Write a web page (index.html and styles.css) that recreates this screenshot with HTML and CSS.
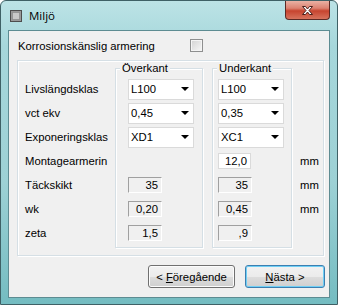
FILE: index.html
```html
<!DOCTYPE html>
<html lang="sv">
<head>
  <meta charset="UTF-8">
  <meta name="viewport" content="width=device-width, initial-scale=1.0">
  <title>Miljö</title>
  <link rel="stylesheet" href="styles.css">
</head>
<body>

<div class="window">
  <!-- Title bar -->
  <div class="titlebar">
    <svg class="app-icon" width="12" height="12" viewBox="0 0 12 12">
      <rect x="0.5" y="0.5" width="11" height="11" fill="#9a9a9a" stroke="#4d4d4d"/>
      <rect x="2.5" y="2.5" width="7" height="7" fill="#c9c9c9" stroke="#7a7a7a" stroke-dasharray="1 1"/>
    </svg>
    <span class="title">Miljö</span>
    <button class="close" aria-label="Stäng">
      <svg width="13" height="11" viewBox="0 0 13 11">
        <path d="M1.5 1.5 L4.5 1.5 L6.5 4 L8.5 1.5 L11.5 1.5 L8 5.5 L11.5 9.5 L8.5 9.5 L6.5 7 L4.5 9.5 L1.5 9.5 L5 5.5 Z" fill="#fff" stroke="#4a1f1a" stroke-width="1"/>
      </svg>
    </button>
  </div>

  <div class="client">
    <div class="check-row">
      <span class="check-label">Korrosionskänslig armering</span>
      <span class="checkbox"></span>
    </div>

    <div class="panel">
      <!-- Row captions -->
      <div class="labels">
        <div class="row">Livslängdsklas</div>
        <div class="row">vct ekv</div>
        <div class="row">Exponeringsklas</div>
        <div class="row">Montagearmerin</div>
        <div class="row">Täckskikt</div>
        <div class="row">wk</div>
        <div class="row">zeta</div>
      </div>

      <!-- Överkant -->
      <div class="group group-over">
        <span class="legend">Överkant</span>
        <div class="rows">
          <div class="row"><div class="combo"><span>L100</span><i class="arrow"></i></div></div>
          <div class="row"><div class="combo"><span>0,45</span><i class="arrow"></i></div></div>
          <div class="row"><div class="combo"><span>XD1</span><i class="arrow"></i></div></div>
          <div class="row"></div>
          <div class="row"><div class="readonly">35</div></div>
          <div class="row"><div class="readonly">0,20</div></div>
          <div class="row"><div class="readonly">1,5</div></div>
        </div>
      </div>

      <!-- Underkant -->
      <div class="group group-under">
        <span class="legend">Underkant</span>
        <div class="rows">
          <div class="row"><div class="combo"><span>L100</span><i class="arrow"></i></div></div>
          <div class="row"><div class="combo"><span>0,35</span><i class="arrow"></i></div></div>
          <div class="row"><div class="combo"><span>XC1</span><i class="arrow"></i></div></div>
          <div class="row"><div class="textbox">12,0</div></div>
          <div class="row"><div class="readonly">35</div></div>
          <div class="row"><div class="readonly">0,45</div></div>
          <div class="row"><div class="readonly">,9</div></div>
        </div>
      </div>

      <!-- Units -->
      <div class="units">
        <div class="row"></div>
        <div class="row"></div>
        <div class="row"></div>
        <div class="row">mm</div>
        <div class="row">mm</div>
        <div class="row">mm</div>
        <div class="row"></div>
      </div>
    </div>

    <div class="buttons">
      <button class="btn btn-prev">&lt; <u>F</u>öregående</button>
      <button class="btn btn-next"><u>N</u>ästa &gt;</button>
    </div>
  </div>
</div>

</body>
</html>
```

FILE: styles.css
```css
body {
  margin: 0;
  font-family: "Liberation Sans", Arial, sans-serif;
  font-size: 11.3px;
  color: #000;
  background: #fff;
}

.window {
  width: 338px;
  height: 305px;
  box-sizing: border-box;
  border: 1px solid #3f6166;
  border-radius: 6px 6px 0 0;
  padding: 0 7px 6px;
  background: linear-gradient(to bottom, #bce3e6 0%, #a6d7db 15%, #9dd1d5 60%, #74bcc1 100%);
  display: flex;
  flex-direction: column;
}

.titlebar {
  height: 29px;
  display: flex;
  align-items: center;
}

.app-icon {
  margin-left: 2px;
}

.title {
  margin-left: 7px;
  font-family: "Open Sans", "Noto Sans", sans-serif;
  font-size: 11.5px;
}

.close {
  margin-left: auto;
  align-self: flex-start;
  width: 45px;
  height: 19px;
  padding: 0;
  border: 1px solid #5b2a25;
  border-top: none;
  border-radius: 0 0 4px 4px;
  background: linear-gradient(to bottom, #eab1a4 0%, #dc8271 40%, #c7442f 55%, #d7735d 100%);
  display: flex;
  align-items: center;
  justify-content: center;
}

.client {
  flex: 1;
  background: #f0f0f0;
  border: 1px solid #5d8c92;
  display: flex;
  flex-direction: column;
}

.check-row {
  height: 29px;
  padding-left: 9px;
  display: flex;
  align-items: center;
}

.check-label {
  width: 172px;
}

.checkbox {
  width: 13px;
  height: 13px;
  box-sizing: border-box;
  border: 1px solid #8e8f8f;
  background: linear-gradient(135deg, #d2d2d2, #f7f7f7);
  box-shadow: inset 0 0 0 1px #f4f4f4;
}

.panel {
  margin-left: 8px;
  width: 307px;
  height: 196px;
  box-sizing: border-box;
  border: 1px solid #d5dfe5;
  box-shadow: inset 1px 1px 0 #fff, 1px 1px 0 #fff;
  display: flex;
}

.row {
  height: 24px;
  display: flex;
  align-items: center;
}

.labels {
  width: 97px;
  box-sizing: border-box;
  padding: 16px 0 0 7px;
}

.group {
  margin: 7px 0;
  border: 1px solid #d5dfe5;
  box-shadow: inset 1px 1px 0 #fff, 1px 1px 0 #fff;
}

.group-over {
  width: 88px;
  box-sizing: border-box;
}

.group-under {
  width: 80px;
  box-sizing: border-box;
  margin-left: 9px;
}

.legend {
  display: block;
  width: fit-content;
  margin: -7px 0 2px 4px;
  padding: 0 2px;
  line-height: 13px;
  background: #f0f0f0;
}

.group-over .rows {
  padding-left: 12px;
}

.group-under .rows {
  padding-left: 5px;
}

.units {
  margin-left: 8px;
  padding-top: 16px;
}

.combo {
  width: 66px;
  height: 21px;
  box-sizing: border-box;
  border: 1px solid #dadada;
  background: #fff;
  padding: 0 4px 0 2px;
  display: flex;
  align-items: center;
  justify-content: space-between;
}

.arrow {
  width: 0;
  height: 0;
  border-left: 4px solid transparent;
  border-right: 4px solid transparent;
  border-top: 4px solid #000;
}

.textbox,
.readonly {
  width: 34px;
  height: 16px;
  box-sizing: border-box;
  padding-right: 3px;
  text-align: right;
  line-height: 14px;
}

.textbox {
  width: 33px;
  background: #fff;
  border: 1px solid #dadada;
}

.readonly {
  background: #f0f0f0;
  border: 1px solid;
  border-color: #a0a0a0 #fff #fff #a0a0a0;
}

.buttons {
  margin-top: 9px;
  padding-right: 4px;
  display: flex;
  justify-content: flex-end;
  gap: 10px;
}

.btn {
  height: 23px;
  padding: 0;
  font: inherit;
  color: #000;
  border: 1px solid #707070;
  border-radius: 3px;
  background: linear-gradient(to bottom, #f2f2f2 0%, #ebebeb 50%, #dddddd 51%, #cfcfcf 100%);
  box-shadow: inset 0 0 0 1px #fcfcfc;
}

.btn-prev {
  width: 87px;
}

.btn-next {
  width: 80px;
  border-color: #3c7fb1;
  box-shadow: inset 0 0 0 1px #6fcff5;
}
```
